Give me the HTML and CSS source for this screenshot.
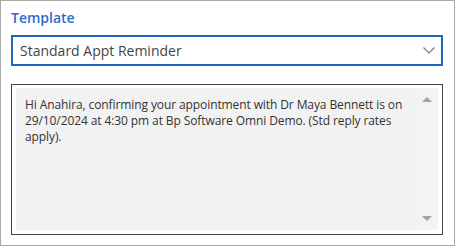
FILE: index.html
```html
<!DOCTYPE html>
<html lang="en">
<head>
  <meta charset="UTF-8">
  <title>Template</title>
  <link rel="stylesheet" href="styles.css">
</head>
<body>
  <div class="panel">
    <label class="field-label">Template</label>
    <div class="select">
      <span class="select-value">Standard Appt Reminder</span>
      <svg class="chevron" width="12" height="7" viewBox="0 0 12 7">
        <path d="M0.5 0.5 L6 6 L11.5 0.5" fill="none" stroke="#777" stroke-width="1.2"/>
      </svg>
    </div>

    <div class="message">
      <div class="message-inner">
        <div class="message-text">Hi Anahira, confirming your appointment with Dr Maya Bennett is on 29/10/2024 at 4:30 pm at Bp Software Omni Demo. (Std reply rates apply).</div>
        <div class="scrollbar">
          <span class="arrow up"></span>
          <span class="arrow down"></span>
        </div>
      </div>
    </div>
  </div>
</body>
</html>
```

FILE: styles.css
```css
* {
  margin: 0;
  padding: 0;
  box-sizing: border-box;
}
body {
  font-family: "Open Sans", "Noto Sans", sans-serif;
  background-color: white;
  color: #444;
}
.panel {
  width: 455px;
  height: 246px;
  border: 1px solid #aaa;
  padding: 7px 11px 0 10px;
}
.field-label {
  display: block;
  font-size: 14px;
  font-weight: 600;
  line-height: 19px;
  color: #2d6cc8;
}
.select {
  margin-top: 8px;
  height: 31px;
  border: 2px solid #1f68c2;
  display: flex;
  align-items: center;
  justify-content: space-between;
  padding: 0 6px 0 7px;
}
.select-value {
  font-size: 14px;
  color: #444;
}
.chevron {
  display: block;
}
.message {
  margin-top: 18px;
  height: 151px;
  border: 1px solid #444;
  padding: 3px 4px 4px 4px;
}
.message-inner {
  height: 100%;
  display: flex;
  background-color: #f2f2f2;
}
.message-text {
  flex: 1;
  padding: 9px 0 9px 9px;
  font-size: 12px;
  line-height: 16px;
  letter-spacing: -0.1px;
  color: #333;
}
.scrollbar {
  width: 22px;
  background-color: #f3f3f3;
  display: flex;
  flex-direction: column;
  justify-content: space-between;
  align-items: center;
  padding: 9px 0 9px 0;
}
.arrow {
  width: 0;
  height: 0;
  border-left: 5px solid transparent;
  border-right: 5px solid transparent;
}
.up {
  border-bottom: 5px solid #a3a3a3;
}
.down {
  border-top: 5px solid #a3a3a3;
}
```
